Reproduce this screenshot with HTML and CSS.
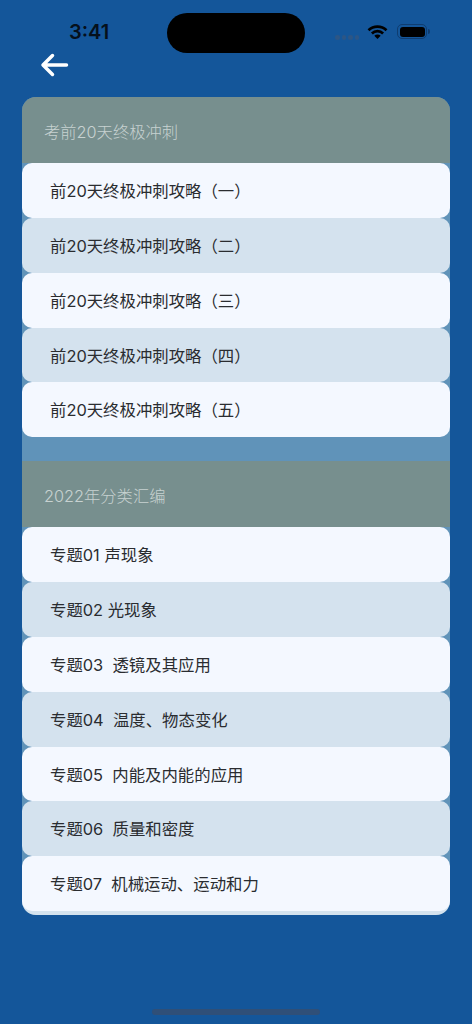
FILE: index.html
```html
<!DOCTYPE html>
<html lang="zh-CN">
<head>
<meta charset="utf-8">
<title>考前20天终极冲刺</title>
<link rel="stylesheet" href="styles.css">
</head>
<body>
<div class="screen">
  <header class="status">
    <span class="time">3:41</span>
    <div class="island"></div>
    <div class="status-icons">
      <span class="dots"><i></i><i></i><i></i><i></i></span>
      <svg class="wifi" width="21" height="15" viewBox="0 0 21 15"><path d="M1.500 6.200A13 13 0 0 1 19.500 6.200M4.900 9.500A8 8 0 0 1 16.100 9.500" fill="none" stroke="#000" stroke-width="2.700"/><path d="M10.500 15 7.300 11.800A4.600 4.600 0 0 1 13.700 11.800Z"/></svg>
      <span class="battery"><span class="battery-fill"></span></span>
      <span class="battery-cap"></span>
    </div>
  </header>
  <button class="back" aria-label="返回">
    <svg width="30" height="26" viewBox="0 0 30 26"><path d="M13.500 3.500 4 13l9.500 9.500M4.500 13H27.500" fill="none" stroke="#fff" stroke-width="3.500" stroke-linecap="round" stroke-linejoin="round"/></svg>
  </button>
  <main class="card">
    <section class="group">
      <h2 class="group-title">考前20天终极冲刺</h2>
      <div class="row">前20天终极冲刺攻略（一）</div>
      <div class="row alt">前20天终极冲刺攻略（二）</div>
      <div class="row">前20天终极冲刺攻略（三）</div>
      <div class="row alt">前20天终极冲刺攻略（四）</div>
      <div class="row">前20天终极冲刺攻略（五）</div>
    </section>
    <section class="group">
      <h2 class="group-title">2022年分类汇编</h2>
      <div class="row">专题01 声现象</div>
      <div class="row alt">专题02 光现象</div>
      <div class="row">专题03&nbsp;&nbsp;透镜及其应用</div>
      <div class="row alt">专题04&nbsp;&nbsp;温度、物态变化</div>
      <div class="row">专题05&nbsp;&nbsp;内能及内能的应用</div>
      <div class="row alt">专题06&nbsp;&nbsp;质量和密度</div>
      <div class="row last">专题07&nbsp;&nbsp;机械运动、运动和力</div>
    </section>
  </main>
  <div class="home-bar"></div>
</div>
</body>
</html>
```

FILE: styles.css
```css
* { box-sizing: border-box; }
html, body { margin: 0; padding: 0; }
body {
  background: #14569a;
  font-family: "Inter", "Noto Sans CJK SC", "Noto Sans", sans-serif;
}
.screen {
  position: relative;
  width: 472px;
  height: 1024px;
  overflow: hidden;
  background: #14569a;
  display: flex;
  flex-direction: column;
}
.status {
  height: 50px;
  padding: 0 42px 0 69px;
  display: flex;
  justify-content: space-between;
  align-items: flex-start;
  flex: none;
}
.time {
  margin-top: 20px;
  font: 600 20px/24px "Inter", sans-serif;
  color: #05101c;
}
.island {
  position: absolute;
  left: 167px;
  top: 13px;
  width: 138px;
  height: 40px;
  border-radius: 20px;
  background: #000;
}
.status-icons {
  margin-top: 24px;
  display: flex;
  align-items: center;
}
.dots { display: flex; gap: 2px; margin: 11px 8px 0 0; }
.dots i { width: 4.500px; height: 4.500px; border-radius: 50%; background: #2c5686; }
.wifi { display: block; fill: #000; margin-right: 9px; }
.battery {
  width: 30px;
  height: 15px;
  padding: 1.500px;
  border: 1px solid #0f3d70;
  border-radius: 5px;
}
.battery-fill { display: block; height: 100%; border-radius: 3px; background: #000; }
.battery-cap { width: 2px; height: 5px; margin-left: 1px; background: #0f3d70; border-radius: 0 2px 2px 0; }
.back {
  display: block;
  flex: none;
  align-self: flex-start;
  margin: 2px 0 0 39px;
  padding: 0;
  width: 30px;
  height: 26px;
  background: none;
  border: 0;
}
.card {
  margin: 19px 22px 0;
  border-radius: 14px;
  overflow: hidden;
  background: #6093b9;
  flex: none;
}
.group + .group { margin-top: 24px; }
.group-title {
  margin: 0;
  height: 66px;
  padding: 0 22px;
  background: #778f8e;
  color: #c7d2d1;
  font-size: 16.300px;
  font-weight: 300;
  line-height: 70px;
}
.row {
  height: 54.850px;
  padding: 0 28px;
  border-radius: 10px;
  background: #f4f8ff;
  color: #2a2c30;
  font-size: 16.400px;
  font-weight: 400;
  line-height: 56.800px;
  white-space: nowrap;
}
.row.alt { background: #d4e2ee; }
.row.last { margin-bottom: 4px; box-shadow: 0 4px 0 #d4e2ee; }
.home-bar {
  position: absolute;
  left: 152px;
  bottom: 9px;
  width: 168px;
  height: 6px;
  border-radius: 3px;
  background: #2f4f78;
}
```
